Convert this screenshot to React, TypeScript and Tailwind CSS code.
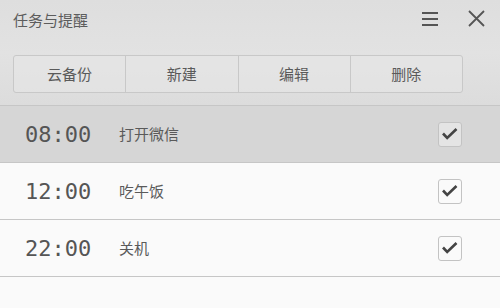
import React from 'react'

type Task = {
    time: string
    title: string
    done: boolean
}

const tasks: Array<Task> = [
    { time: '08:00', title: '打开微信', done: true },
    { time: '12:00', title: '吃午饭', done: true },
    { time: '22:00', title: '关机', done: true },
]

const actions = ['云备份', '新建', '编辑', '删除']

function CheckBox(props: { checked: boolean }) {
    return (
        <div className="w-[24px] h-[25px] rounded-[3px] border border-[#c3c3c3] bg-[#fafafa]/40 flex items-center justify-center">
            {props.checked && (
                <svg width="16" height="14" viewBox="0 0 16 14">
                    <path d="M1 6.5 L5.2 11 L14.5 2" fill="none" stroke="#444" strokeWidth="2.6" />
                </svg>
            )}
        </div>
    )
}

function App() {
    return (
        <div
            className="w-[500px] h-[308px] bg-[#fafafa] overflow-hidden flex flex-col text-[#555]"
            style={{ fontFamily: '"Noto Sans CJK SC", "Noto Sans", sans-serif' }}
        >
            {/* header */}
            <div className="h-[106px] shrink-0 border-b border-[#c6c6c6] bg-gradient-to-b from-[#dedede] via-[#e2e2e2] to-[#dcdcdc] flex flex-col">
                <div className="h-[42px] flex items-start pl-[13px] pt-[9px]">
                    <span className="text-[15px] leading-[22px] text-[#5c5c5c]">任务与提醒</span>
                    <div className="ml-auto flex items-center gap-[30px] mr-[15px] mt-[1px]">
                        <svg width="16" height="16" viewBox="0 0 16 16">
                            <rect x="0" y="1" width="16" height="2" fill="#555" />
                            <rect x="0" y="7" width="16" height="2" fill="#555" />
                            <rect x="0" y="13" width="16" height="2" fill="#555" />
                        </svg>
                        <svg width="17" height="17" viewBox="0 0 17 17">
                            <path d="M1 1 L16 16 M16 1 L1 16" stroke="#555" strokeWidth="1.8" fill="none" />
                        </svg>
                    </div>
                </div>
                <div className="ml-[13px] mt-[13px] w-[450px] h-[38px] flex rounded-[3px] border border-[#c8c8c8] bg-[#e6e6e6]/60">
                    {actions.map((label, i) => (
                        <button
                            key={label}
                            className={
                                i === 0
                                    ? 'flex-1 flex items-center justify-center text-[15px] text-[#5a5a5a]'
                                    : 'flex-1 flex items-center justify-center text-[15px] text-[#5a5a5a] border-l border-[#c8c8c8]'
                            }
                        >
                            {label}
                        </button>
                    ))}
                </div>
            </div>

            {/* rows */}
            {tasks.map((task, i) => (
                <div
                    key={task.time}
                    className={
                        i === 0
                            ? 'h-[57px] shrink-0 flex items-center bg-[#d6d6d6] border-b border-[#c6c6c6]'
                            : 'h-[57px] shrink-0 flex items-center bg-[#fafafa] border-b border-[#c6c6c6]'
                    }
                >
                    <span
                        className="ml-[25px] w-[94px] text-[22px] text-[#555]"
                        style={{ fontFamily: '"DejaVu Sans Mono", monospace' }}
                    >
                        {task.time}
                    </span>
                    <span className="text-[15px] text-[#5a5a5a]">{task.title}</span>
                    <div className="ml-auto mr-[38px]">
                        <CheckBox checked={task.done} />
                    </div>
                </div>
            ))}
        </div>
    )
}

export default App
